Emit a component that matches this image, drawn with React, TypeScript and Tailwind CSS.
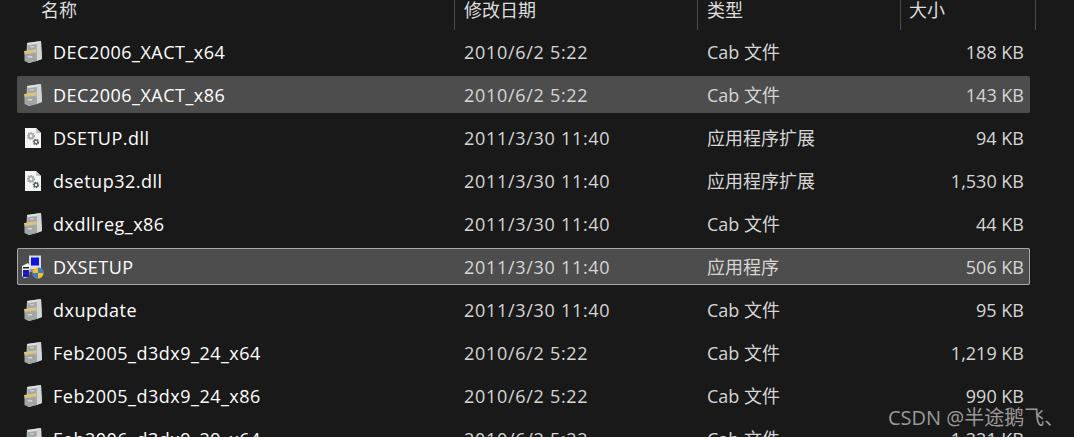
// App.tsx
const files = [
  {name: "DEC2006_XACT_x64", date: "2010/6/2 5:22", type: "Cab 文件", size: "188 KB", icon: "cab"},
  {name: "DEC2006_XACT_x86", date: "2010/6/2 5:22", type: "Cab 文件", size: "143 KB", icon: "cab", state: "hover"},
  {name: "DSETUP.dll", date: "2011/3/30 11:40", type: "应用程序扩展", size: "94 KB", icon: "dll"},
  {name: "dsetup32.dll", date: "2011/3/30 11:40", type: "应用程序扩展", size: "1,530 KB", icon: "dll"},
  {name: "dxdllreg_x86", date: "2011/3/30 11:40", type: "Cab 文件", size: "44 KB", icon: "cab"},
  {name: "DXSETUP", date: "2011/3/30 11:40", type: "应用程序", size: "506 KB", icon: "setup", state: "focus"},
  {name: "dxupdate", date: "2011/3/30 11:40", type: "Cab 文件", size: "95 KB", icon: "cab"},
  {name: "Feb2005_d3dx9_24_x64", date: "2010/6/2 5:22", type: "Cab 文件", size: "1,219 KB", icon: "cab"},
  {name: "Feb2005_d3dx9_24_x86", date: "2010/6/2 5:22", type: "Cab 文件", size: "990 KB", icon: "cab"},
  {name: "Feb2006_d3dx9_29_x64", date: "2010/6/2 5:22", type: "Cab 文件", size: "1,221 KB", icon: "cab"},
];

function CabIcon() {
  return (
    <svg width="20" height="24" viewBox="0 0 20 24">
      <path d="M4 3 L18 1 L19 19 L6 23 L3 21 Z" fill="#b4b8b6" />
      <path d="M4 3 L18 1 L14.5 3.5 L5 5 Z" fill="#e0e2e1" />
      <path d="M14 4 L18 1 L19 19 L14 21 Z" fill="#d3d6d5" />
      <path d="M5 5.5 L13.5 4.5 L13.5 9 L5 10 Z" fill="#a3a8a6" />
      <rect x="7" y="6" width="4" height="1.5" fill="#c8cbca" />
      <path d="M1 11 L13 9.5 L13.5 13 L1.5 14.5 Z" fill="#dcc27c" />
      <path d="M1.5 14 L13.5 12.5 L14 21 L6 23 L1.5 21 Z" fill="#a2a7a5" />
      <rect x="5" y="16" width="4" height="1.5" fill="#d4d7d6" />
    </svg>
  );
}

function Gear({cx, cy, r, color}: {cx: number; cy: number; r: number; color: string}) {
  return (
    <g>
      <circle cx={cx} cy={cy} r={r} fill="none" stroke={color} strokeWidth={r * 0.7} strokeDasharray="1.4 0.8" />
      <circle cx={cx} cy={cy} r={r * 0.75} fill="none" stroke={color} strokeWidth={r * 0.55} />
    </g>
  );
}

function DllIcon() {
  return (
    <svg width="18" height="22" viewBox="0 0 18 22">
      <path d="M1 1 H12 L17 6 V21 H1 Z" fill="#f4f4f4" />
      <path d="M12 1 L17 6 H12 Z" fill="#c4c4c4" />
      <Gear cx={7} cy={9} r={3} color="#a4abb0" />
      <Gear cx={12} cy={15} r={2.4} color="#5f6466" />
    </svg>
  );
}

function SetupIcon() {
  return (
    <svg width="24" height="24" viewBox="0 0 24 24">
      <path d="M8 0.5 H20 V14 H8 Z" fill="#dcdce4" />
      <rect x="10" y="2.5" width="8" height="8" fill="#1212d8" />
      <path d="M8 14 H20 L21 17 H8 Z" fill="#8d8da0" />
      <path d="M1 11 L7 8 L9 11 L8 22 L3 23 L1 21 Z" fill="#f2f2f2" />
      <rect x="2" y="15" width="6" height="7" fill="#1a1ac0" />
      <rect x="2" y="12" width="6" height="1.5" fill="#222222" />
      <circle cx="17" cy="18" r="5.5" fill="#f2c21d" />
      <path d="M17 12.5 A5.5 5.5 0 0 1 22.5 18 H17 Z" fill="#3b78d8" />
      <path d="M17 18 H11.5 A5.5 5.5 0 0 0 17 23.5 Z" fill="#3b78d8" />
    </svg>
  );
}

function FileIcon({kind}: {kind: string}) {
  if (kind === "dll") return <DllIcon />;
  if (kind === "setup") return <SetupIcon />;
  return <CabIcon />;
}

export default function App() {
  return (
    <div
      className="relative h-[437px] w-[1074px] overflow-hidden bg-[#191919] text-[18px]"
      style={{fontFamily: '"Open Sans", "Noto Sans", "Noto Sans CJK SC", sans-serif'}}
    >
      {/* Column header */}
      <div className="flex h-[30px] text-[#dedede]">
        <div className="w-[455px] border-r border-[#4a4a4a] pl-[41px] leading-[20px]">名称</div>
        <div className="w-[243px] border-r border-[#4a4a4a] pl-[9px] leading-[20px]">修改日期</div>
        <div className="w-[203px] border-r border-[#4a4a4a] pl-[9px] leading-[20px]">类型</div>
        <div className="w-[135px] border-r border-[#4a4a4a] pl-[8px] leading-[20px]">大小</div>
      </div>

      {/* File rows */}
      <div className="ml-[17px] flex w-[1013px] flex-col gap-[6px] pt-[3px]">
        {files.map((file) => (
          <div
            key={file.name}
            className={`flex h-[37px] shrink-0 items-center rounded-[2px] ${
              file.state === "hover"
                ? "bg-[#4d4d4d]"
                : file.state === "focus"
                  ? "bg-[#4d4d4d] shadow-[inset_0_0_0_1px_#a8a8a8]"
                  : ""
            }`}
          >
            <div className="flex w-[36px] shrink-0 justify-center pr-[5px]">
              <FileIcon kind={file.icon} />
            </div>
            <div className="w-[411px] shrink-0 pt-[2px] tracking-[0.5px] text-[#ffffff]">{file.name}</div>
            <div className="w-[243px] shrink-0 pt-[2px] tracking-[0.7px] text-[#d6d6d6]">{file.date}</div>
            <div className="w-[200px] shrink-0 pt-[2px] text-[#d6d6d6]">{file.type}</div>
            <div className="flex-1 pr-[6px] pt-[2px] text-right text-[#d6d6d6]">{file.size}</div>
          </div>
        ))}
      </div>

      {/* Watermark */}
      <div className="absolute left-[888px] top-[406px] text-[20px] leading-[24px] text-[#9a9a9a]">
        CSDN @半途鹅飞、
      </div>
    </div>
  );
}
